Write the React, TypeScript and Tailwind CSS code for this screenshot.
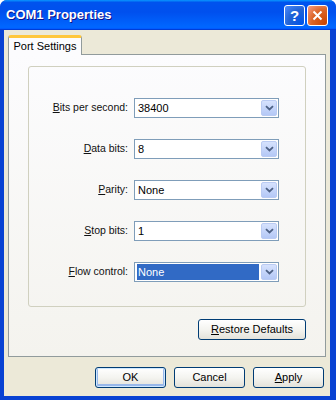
import React from "react";

const font = { fontFamily: '"Liberation Sans", Arial, sans-serif' };

function Chevron() {
  return (
    <svg width="9" height="6" viewBox="0 0 9 6">
      <path d="M1 1.2 L4.5 4.5 L8 1.2" fill="none" stroke="#4d6185" strokeWidth="1.8" />
    </svg>
  );
}

function Combo({ value, selected }: { value: string; selected?: boolean }) {
  return (
    <div className="w-[145px] h-[20px] border border-[#7f9db9] bg-white flex items-center p-[1px]">
      <div className="flex-1 h-full flex items-center pl-[1px] pr-[2px]">
        {selected ? (
          <div className="w-full h-[16px] bg-[#316ac5] text-white flex items-center pl-[1px] text-[11px] leading-none">
            {value}
          </div>
        ) : (
          <span className="text-[11px] leading-none text-black pl-[1px]">{value}</span>
        )}
      </div>
      <div className="w-[16px] h-full rounded-[2px] border border-[#bacbf3] bg-gradient-to-b from-[#d6e2fd] to-[#b4c8f6] flex items-center justify-center">
        <Chevron />
      </div>
    </div>
  );
}

function Row({ label, k, rest, value, selected }: { label?: string; k: string; rest: string; value: string; selected?: boolean }) {
  return (
    <div className="flex items-center">
      <div className="w-[105px] text-right text-[10.5px] text-[#111] pr-[6px]">
        {label}
        <span className="underline">{k}</span>
        {rest}
      </div>
      <Combo value={value} selected={selected} />
    </div>
  );
}

function Btn({ children, def }: { children: React.ReactNode; def?: boolean }) {
  return (
    <div
      className={
        "h-[21px] rounded-[3px] border border-[#003c74] bg-gradient-to-b from-[#ffffff] via-[#f4f4f0] to-[#e3e2da] flex items-center justify-center text-[11px] text-black " +
        (def ? "shadow-[inset_0_0_0_1px_#cee7ff,inset_0_-1px_0_2px_#98b8ea]" : "")
      }
    >
      {children}
    </div>
  );
}

export default function App() {
  return (
    <div style={font} className="w-[336px] h-[400px] bg-[#0842d3] flex flex-col rounded-t-[7px] overflow-hidden">
      <div className="h-[30px] shrink-0 bg-[linear-gradient(180deg,#0997ff,#0053ee_8%,#0050ee_40%,#0066ff_88%,#0066ff_93%,#005bff_95%,#003dd7_96%,#003dd7)] flex items-center pl-[6px] pr-[8px]">
        <span className="text-white font-bold text-[13px] [text-shadow:1px_1px_#0f1089] flex-1">COM1 Properties</span>
        <div className="w-[21px] h-[21px] rounded-[3px] border border-white bg-[radial-gradient(circle_at_90%_90%,#0054e9_0%,#2263d5_55%,#4483f5_90%)] flex items-center justify-center text-white font-bold text-[15px] leading-none mr-[2px]">
          ?
        </div>
        <div className="w-[21px] h-[21px] rounded-[3px] border border-white bg-[radial-gradient(circle_at_90%_90%,#cc4600_0%,#dc6527_55%,#f29272_90%)] flex items-center justify-center">
          <svg width="11" height="11" viewBox="0 0 11 11">
            <path d="M1.5 1.5 L9.5 9.5 M9.5 1.5 L1.5 9.5" stroke="white" strokeWidth="2" />
          </svg>
        </div>
      </div>
      <div className="flex-1 ml-[4px] mr-[6px] mb-[5px] bg-[#ece9d8] flex flex-col px-[4px] pt-[5px] pb-[8px]">
        <div className="flex">
          <div className="relative z-10 h-[20px] w-[74px] -mb-[1px] bg-[#fcfcfe] border-x border-[#919b9c] rounded-t-[3px] border-t-[3px] border-t-[#ffc73c] flex items-center justify-center text-[11px] text-black">
            Port Settings
          </div>
        </div>
        <div className="h-[303px] border border-[#919b9c] bg-gradient-to-b from-[#fcfcfe] to-[#f4f3ee] flex flex-col px-[19px] pt-[11px]">
          <div className="h-[241px] border border-[#d0d0bf] rounded-[3px] flex flex-col gap-[21px] pt-[31px]">
            <Row k="B" rest="its per second:" value="38400" />
            <Row k="D" rest="ata bits:" value="8" />
            <Row k="P" rest="arity:" value="None" />
            <Row k="S" rest="top bits:" value="1" />
            <Row k="F" rest="low control:" value="None" selected />
          </div>
          <div className="flex justify-end mt-[12px]">
            <div className="w-[108px]">
              <Btn>
                <span className="underline">R</span>estore Defaults
              </Btn>
            </div>
          </div>
        </div>
        <div className="flex justify-end gap-[8px] mt-[10px] pr-[2px]">
          <div className="w-[71px]"><Btn def>OK</Btn></div>
          <div className="w-[71px]"><Btn>Cancel</Btn></div>
          <div className="w-[71px]"><Btn><span className="underline">A</span>pply</Btn></div>
        </div>
      </div>
    </div>
  );
}
